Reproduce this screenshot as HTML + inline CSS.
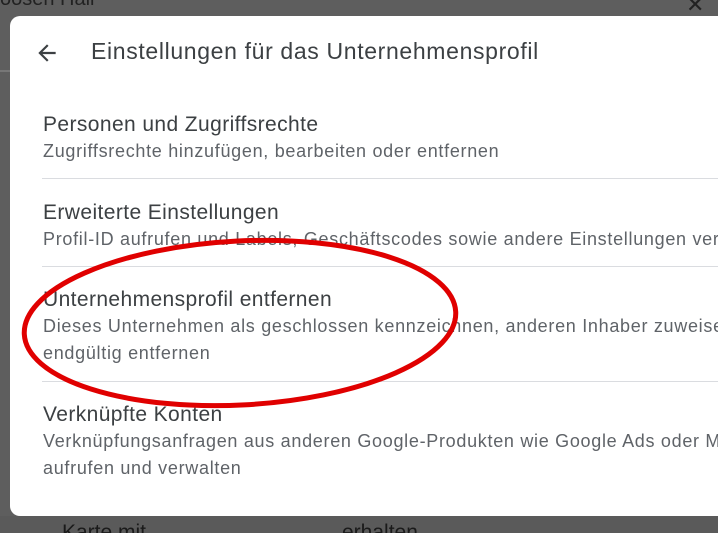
<!DOCTYPE html>
<html><head><style>
body{margin:0;width:718px;height:533px;overflow:hidden;background:#5e5e5e;font-family:"Liberation Sans",Arial,sans-serif;position:relative}
.wrap{position:absolute;left:0;top:0;width:718px;height:533px;overflow:hidden}
.dlg{position:absolute;left:10px;top:16px;width:708px;height:500px;background:#fff;border-radius:10px 0 0 10px;overflow:hidden}
.t{position:absolute;left:81px;top:22px;font-size:23px;letter-spacing:0.65px;color:#3c4043;white-space:nowrap}
.it{position:absolute;left:33px;white-space:nowrap}
.h{font-size:21px;letter-spacing:0.4px;color:#3c4043;line-height:26px}
.s{font-size:18px;letter-spacing:0.7px;color:#5f6368;line-height:27px}
.hr{position:absolute;left:32px;width:700px;height:1px;background:#dadce0}
</style></head><body><div class="wrap">
<div style="position:absolute;left:0;top:-12px;font-size:20px;color:#222">oosen Hall</div>
<div style="position:absolute;left:0;top:70px;width:10px;height:2px;background:#777"></div>
<div style="position:absolute;left:686px;top:-8px;font-size:22px;color:#222">✕</div>
<div style="position:absolute;left:0;top:516px;width:718px;height:17px;background:#5a5a5a"></div>
<div style="position:absolute;left:62px;top:521px;font-size:21px;color:#1a1a1a">Karte mit</div>
<div style="position:absolute;left:342px;top:521px;font-size:21px;color:#1a1a1a">erhalten</div>
<div class="dlg">
<svg style="position:absolute;left:24px;top:24px" width="26" height="26" viewBox="0 0 24 24"><path d="M20 11H7.83l5.59-5.59L12 4l-8 8 8 8 1.41-1.41L7.83 13H20v-2z" fill="#3c4043"/></svg>
<div class="t">Einstellungen für das Unternehmensprofil</div>
<div class="it" style="top:96px"><div class="h">Personen und Zugriffsrechte</div><div class="s">Zugriffsrechte hinzufügen, bearbeiten oder entfernen</div></div>
<div class="hr" style="top:162px"></div>
<div class="it" style="top:184px"><div class="h">Erweiterte Einstellungen</div><div class="s">Profil-ID aufrufen und Labels, Geschäftscodes sowie andere Einstellungen verwalten</div></div>
<div class="hr" style="top:250px"></div>
<div class="it" style="top:271px"><div class="h">Unternehmensprofil entfernen</div><div class="s">Dieses Unternehmen als geschlossen kennzeichnen, anderen Inhaber zuweisen oder<br>endgültig entfernen</div></div>
<div class="hr" style="top:365px"></div>
<div class="it" style="top:386px"><div class="h">Verknüpfte Konten</div><div class="s">Verknüpfungsanfragen aus anderen Google-Produkten wie Google Ads oder Merchant Center<br>aufrufen und verwalten</div></div>
</div>
<svg style="position:absolute;left:0;top:0" width="718" height="533"><ellipse cx="240" cy="323" rx="216" ry="82" fill="none" stroke="#e00000" stroke-width="5" transform="rotate(-3 240 323)"/></svg>
</div></body></html>
